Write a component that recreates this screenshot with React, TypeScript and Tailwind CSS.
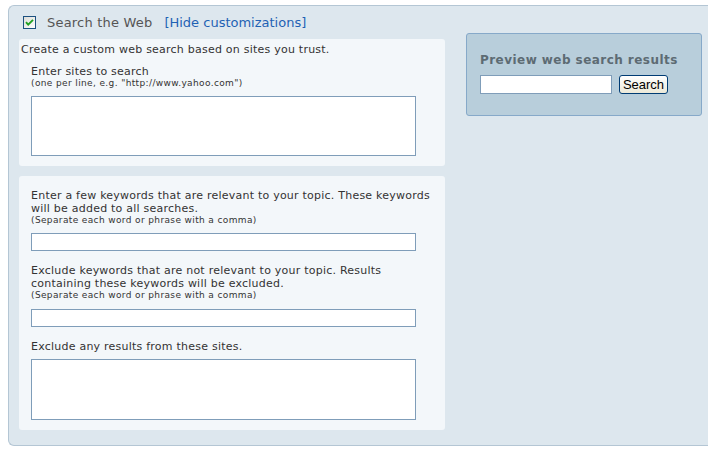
import React from "react";

const font = { fontFamily: '"DejaVu Sans", Verdana, sans-serif' };

function Check() {
  return (
    <svg width="13" height="13" viewBox="0 0 13 13" className="block">
      <defs>
        <linearGradient id="cb" x1="0" y1="0" x2="1" y2="1">
          <stop offset="0" stopColor="#dcdcd7" />
          <stop offset="1" stopColor="#ffffff" />
        </linearGradient>
      </defs>
      <rect x="0.5" y="0.5" width="12" height="12" fill="url(#cb)" stroke="#1c5180" />
      <path d="M3 6.2 L5.2 8.6 L10 3.8" fill="none" stroke="#21a121" strokeWidth="1.9" />
    </svg>
  );
}

export default function App() {
  return (
    <div className="w-[708px] h-[452px] bg-white overflow-hidden pt-[5px] pl-[8px]" style={font}>
      <div className="w-[720px] h-[441px] bg-[#dde7ee] border border-r-0 border-[#b4c6d4] rounded-l-[6px] flex pl-[10px]">
        {/* left column */}
        <div className="w-[426px] flex flex-col">
          <div className="h-[33px] flex items-center pl-[4px]">
            <Check />
            <span className="ml-[11px] text-[13px] leading-[16px] tracking-[0.2px] text-[#555] whitespace-nowrap">Search the Web</span>
            <span className="ml-[12px] text-[13px] leading-[16px] text-[#1f62b4] whitespace-nowrap">[Hide customizations]</span>
          </div>

          <div className="bg-[#f3f7fa] rounded-[3px] pt-[4px] pl-[2px] pb-[10px] text-[#333]">
            <div className="text-[11px] leading-[13px] tracking-[0.23px] whitespace-nowrap">Create a custom web search based on sites you trust.</div>
            <div className="ml-[10px] mt-[9px]">
              <div className="text-[11px] leading-[13px] tracking-[0.23px] whitespace-nowrap">Enter sites to search</div>
              <div className="text-[9px] leading-[11px] tracking-[0.37px] whitespace-nowrap">(one per line, e.g. "http://www.yahoo.com")</div>
              <div className="mt-[7px] w-[385px] h-[60px] bg-white border border-[#7f9db9]" />
            </div>
          </div>

          <div className="mt-[10px] bg-[#f3f7fa] rounded-[3px] pt-[13px] pl-[12px] pb-[10px] text-[#333]">
            <div className="text-[11px] leading-[13px] tracking-[0.23px] whitespace-nowrap">
              Enter a few keywords that are relevant to your topic. These keywords
              <br />
              will be added to all searches.
            </div>
            <div className="text-[9px] leading-[11px] tracking-[0.37px] whitespace-nowrap">(Separate each word or phrase with a comma)</div>
            <div className="mt-[7px] w-[385px] h-[18px] bg-white border border-[#7f9db9]" />

            <div className="mt-[13px] text-[11px] leading-[13px] tracking-[0.23px] whitespace-nowrap">
              Exclude keywords that are not relevant to your topic. Results
              <br />
              containing these keywords will be excluded.
            </div>
            <div className="text-[9px] leading-[11px] tracking-[0.37px] whitespace-nowrap">(Separate each word or phrase with a comma)</div>
            <div className="mt-[8px] w-[385px] h-[18px] bg-white border border-[#7f9db9]" />

            <div className="mt-[13px] text-[11px] leading-[13px] tracking-[0.23px] whitespace-nowrap">Exclude any results from these sites.</div>
            <div className="mt-[6px] w-[385px] h-[61px] bg-white border border-[#7f9db9]" />
          </div>
        </div>

        {/* right column */}
        <div className="ml-[21px] mt-[27px]">
          <div className="w-[236px] h-[83px] bg-[#b8cedb] border border-[#86a9c9] rounded-[3px] pt-[19px] pl-[13px]">
            <div className="text-[12px] leading-[15px] font-bold tracking-[0.45px] text-[#5d6b73] whitespace-nowrap">Preview web search results</div>
            <div className="mt-[7px] flex gap-[7px]">
              <div className="w-[132px] h-[19px] bg-white border border-[#7f9db9]" />
              <button
                className="w-[49px] h-[19px] rounded-[3px] border border-[#003c74] bg-gradient-to-b from-white to-[#ece9d8] text-[13px] leading-[15px] text-black flex items-center justify-center"
                style={{ fontFamily: '"Liberation Sans", Arial, sans-serif' }}
              >
                Search
              </button>
            </div>
          </div>
        </div>
      </div>
    </div>
  );
}
